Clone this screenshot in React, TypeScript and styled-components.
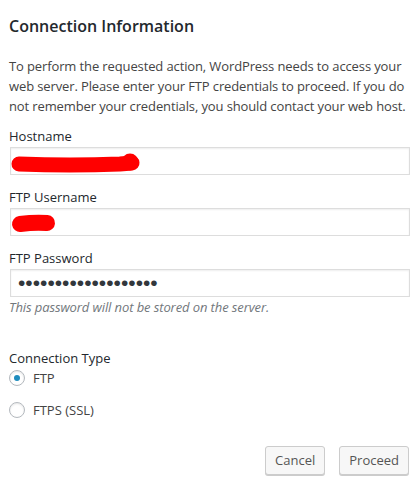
import React, { useState } from "react";
import styled, { createGlobalStyle } from "styled-components";

const GlobalStyle = createGlobalStyle`
  html, body {
    margin: 0;
    padding: 0;
    background: #ffffff;
  }
  body {
    font-family: "Open Sans", "Noto Sans", sans-serif;
    color: #444444;
  }
`;

const Dialog = styled.form`
  width: 419px;
  box-sizing: border-box;
  padding: 12px 9px 6px 9px;
`;

const Title = styled.h2`
  margin: 0;
  font-size: 16px;
  line-height: 28px;
  font-weight: 600;
  color: #23282d;
`;

const Intro = styled.p`
  margin: 16px 0 10px;
  font-size: 13px;
  line-height: 20px;
  letter-spacing: -0.12px;
`;

const Label = styled.label`
  display: block;
  font-size: 13px;
  line-height: 20px;
  color: #23282d;
`;

const FieldGroup = styled.div`
  margin-bottom: 12px;
`;

const FieldBox = styled.div`
  position: relative;
  margin: 1px 0 0 1px;
`;

const Input = styled.input<{ masked?: boolean }>`
  display: block;
  width: 100%;
  height: 28px;
  box-sizing: border-box;
  margin: 0;
  padding: 0 7px;
  border: 1px solid #dddddd;
  box-shadow: inset 0 1px 2px rgba(0, 0, 0, 0.07);
  background: #ffffff;
  color: #32373c;
  font-family: ${({ masked }) => (masked ? '"Liberation Sans", sans-serif' : "inherit")};
  font-size: ${({ masked }) => (masked ? "21px" : "13px")};
  outline: none;
`;

const Scribble = styled.svg`
  position: absolute;
  left: 0;
  top: 0;
  pointer-events: none;
`;

const Hint = styled.p`
  margin: 0;
  font-size: 13px;
  line-height: 20px;
  font-style: italic;
  color: #72777c;
  letter-spacing: -0.1px;
`;

const TypeSection = styled.fieldset`
  margin: 31px 0 0;
  padding: 0;
  border: none;
`;

const Legend = styled.legend`
  padding: 0;
  font-size: 13px;
  line-height: 20px;
  color: #23282d;
`;

const RadioRow = styled.label<{ gap?: number }>`
  display: flex;
  align-items: center;
  gap: 8px;
  height: 20px;
  margin-bottom: ${({ gap }) => gap ?? 0}px;
  font-size: 13px;
  color: #444444;
  cursor: pointer;
`;

const RadioCircle = styled.span<{ checked: boolean }>`
  position: relative;
  width: 16px;
  height: 16px;
  box-sizing: border-box;
  border-radius: 50%;
  border: 1px solid #b4b9be;
  background: #ffffff;
  box-shadow: inset 0 1px 2px rgba(0, 0, 0, 0.1);
  &::after {
    content: "";
    display: ${({ checked }) => (checked ? "block" : "none")};
    position: absolute;
    left: 4px;
    top: 4px;
    width: 6px;
    height: 6px;
    border-radius: 50%;
    background: #1e8cbe;
  }
`;

const Actions = styled.div`
  display: flex;
  justify-content: flex-end;
  gap: 14px;
  margin-top: 26px;
  padding-right: 1px;
`;

const Button = styled.button`
  height: 29px;
  padding: 0 9px 1px;
  border: 1px solid #cccccc;
  border-radius: 3px;
  background: #f7f7f7;
  box-shadow: 0 1px 0 #cccccc;
  color: #555555;
  font-family: inherit;
  font-size: 13px;
  cursor: pointer;
`;

const App = () => {
  const [type, setType] = useState("ftp");

  return (
    <>
      <GlobalStyle />
      <Dialog onSubmit={(e) => e.preventDefault()}>
        <Title>Connection Information</Title>
        <Intro>
          To perform the requested action, WordPress needs to access your web
          server. Please enter your FTP credentials to proceed. If you do not
          remember your credentials, you should contact your web host.
        </Intro>

        <FieldGroup>
          <Label htmlFor="hostname">Hostname</Label>
          <FieldBox>
            <Input id="hostname" type="text" defaultValue="" />
            <Scribble width="150" height="28">
              <path
                d="M9 17 Q60 19 110 17 L122 16"
                stroke="#ff0000"
                strokeWidth="15"
                strokeLinecap="round"
                fill="none"
              />
              <circle cx="120" cy="15" r="8.5" fill="#ff0000" />
            </Scribble>
          </FieldBox>
        </FieldGroup>

        <FieldGroup>
          <Label htmlFor="username">FTP Username</Label>
          <FieldBox>
            <Input id="username" type="text" defaultValue="" />
            <Scribble width="60" height="28">
              <path
                d="M10 16 Q25 14 37 15"
                stroke="#ff0000"
                strokeWidth="16"
                strokeLinecap="round"
                fill="none"
              />
            </Scribble>
          </FieldBox>
        </FieldGroup>

        <div>
          <Label htmlFor="password">FTP Password</Label>
          <FieldBox>
            <Input
              id="password"
              type="password"
              masked
              defaultValue="xxxxxxxxxxxxxxxxxxx"
            />
          </FieldBox>
          <Hint>This password will not be stored on the server.</Hint>
        </div>

        <TypeSection>
          <Legend>Connection Type</Legend>
          <RadioRow gap={12} onClick={() => setType("ftp")}>
            <RadioCircle checked={type === "ftp"} />
            FTP
          </RadioRow>
          <RadioRow onClick={() => setType("ftps")}>
            <RadioCircle checked={type === "ftps"} />
            FTPS (SSL)
          </RadioRow>
        </TypeSection>

        <Actions>
          <Button type="button">Cancel</Button>
          <Button type="submit">Proceed</Button>
        </Actions>
      </Dialog>
    </>
  );
};

export default App;
